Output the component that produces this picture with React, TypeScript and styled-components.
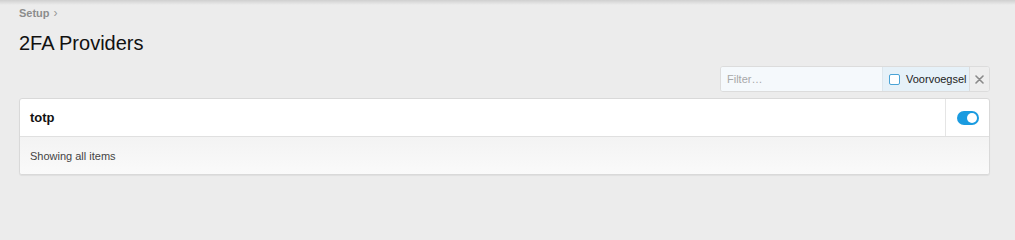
import React, { useState } from 'react'
import styled, { createGlobalStyle } from 'styled-components'

const GlobalStyle = createGlobalStyle`
  html, body {
    margin: 0;
    padding: 0;
    background: #ececec;
    font-family: 'Helvetica Neue', 'Liberation Sans', Arial, sans-serif;
    -webkit-font-smoothing: antialiased;
  }
`

const Page = styled.div`
  position: relative;
  height: 200px;
  padding: 6px 25px 0 19px;
  box-sizing: border-box;
  overflow: hidden;

  &::before {
    content: '';
    position: absolute;
    top: 0;
    left: 0;
    right: 0;
    height: 5px;
    background: linear-gradient(to bottom, rgba(0, 0, 0, 0.12), rgba(0, 0, 0, 0));
  }
`

const Breadcrumb = styled.div`
  display: flex;
  align-items: center;
  gap: 4px;
  font-size: 11px;
  font-weight: 700;
  color: #8c8c8c;
  height: 14px;
`

const Chevron = styled.span`
  font-weight: 400;
  font-size: 12px;
  color: #999;
`

const Title = styled.h1`
  margin: 11px 0 0;
  font-size: 20px;
  font-weight: 400;
  color: #111;
  line-height: 24px;
`

const Toolbar = styled.div`
  display: flex;
  justify-content: flex-end;
  margin-top: 11px;
`

const FilterGroup = styled.div`
  display: flex;
  width: 270px;
  height: 26px;
  border: 1px solid #dcdcdc;
  border-radius: 3px;
  overflow: hidden;
  box-sizing: border-box;
  background: #f5f9fc;
`

const FilterInput = styled.input`
  flex: 1;
  min-width: 0;
  width: 0;
  border: none;
  outline: none;
  background: #f5f9fc;
  padding: 0 6px;
  font-family: inherit;
  font-size: 11px;
  color: #333;

  &::placeholder {
    color: #a8a8a8;
  }
`

const PrefixLabel = styled.label`
  flex-shrink: 0;
  display: flex;
  align-items: center;
  gap: 6px;
  padding: 0 6px;
  width: 87px;
  box-sizing: border-box;
  border-left: 1px solid #dde6ec;
  background: #e6f1f8;
  font-size: 11px;
  color: #222;
  cursor: pointer;
`

const CheckBox = styled.span<{ checked: boolean }>`
  flex-shrink: 0;
  width: 9px;
  height: 9px;
  border: 1px solid #4aa3d6;
  border-radius: 2px;
  background: ${(p) => (p.checked ? '#1a9be0' : '#fff')};
`

const ClearButton = styled.button`
  flex-shrink: 0;
  width: 20px;
  border: none;
  border-left: 1px solid #dcdcdc;
  background: #eeeeee;
  color: #8a8a8a;
  padding: 0;
  display: flex;
  align-items: center;
  justify-content: center;
  cursor: pointer;
`

const Card = styled.div`
  margin-top: 6px;
  background: #fff;
  border: 1px solid #d9d9d9;
  border-radius: 3px;
  box-shadow: 0 1px 1px rgba(0, 0, 0, 0.06);
  overflow: hidden;
`

const Row = styled.div`
  display: flex;
  height: 37px;
  border-bottom: 1px solid #e0e0e0;
`

const RowName = styled.div`
  flex: 1;
  display: flex;
  align-items: center;
  padding-left: 10px;
  font-size: 13px;
  font-weight: 700;
  color: #111;
`

const RowAction = styled.div`
  width: 43px;
  border-left: 1px solid #e5e5e5;
  display: flex;
  align-items: center;
  justify-content: center;
`

const Toggle = styled.button<{ on: boolean }>`
  position: relative;
  width: 22px;
  height: 14px;
  border: none;
  border-radius: 7px;
  padding: 0;
  background: ${(p) => (p.on ? '#1a9be0' : '#ccc')};
  cursor: pointer;

  &::after {
    content: '';
    position: absolute;
    top: 2px;
    left: ${(p) => (p.on ? '10px' : '2px')};
    width: 10px;
    height: 10px;
    border-radius: 50%;
    background: #fff;
  }
`

const Footer = styled.div`
  height: 37px;
  display: flex;
  align-items: center;
  padding-left: 10px;
  font-size: 11px;
  color: #444;
  background: linear-gradient(to bottom, #f3f3f3, #fafafa);
`

export default function App() {
  const [filter, setFilter] = useState('')
  const [prefix, setPrefix] = useState(false)
  const [enabled, setEnabled] = useState(true)

  return (
    <>
      <GlobalStyle />
      <Page>
        <Breadcrumb>
          Setup <Chevron>›</Chevron>
        </Breadcrumb>
        <Title>2FA Providers</Title>
        <Toolbar>
          <FilterGroup>
            <FilterInput placeholder="Filter…" value={filter} onChange={(e) => setFilter(e.target.value)} />
            <PrefixLabel onClick={() => setPrefix(!prefix)}>
              <CheckBox checked={prefix} />
              Voorvoegsel
            </PrefixLabel>
            <ClearButton onClick={() => setFilter('')}>
              <svg width="9" height="9" viewBox="0 0 9 9">
                <path d="M1 1L8 8M8 1L1 8" stroke="currentColor" strokeWidth="1.6" strokeLinecap="round" />
              </svg>
            </ClearButton>
          </FilterGroup>
        </Toolbar>
        <Card>
          <Row>
            <RowName>totp</RowName>
            <RowAction>
              <Toggle on={enabled} onClick={() => setEnabled(!enabled)} />
            </RowAction>
          </Row>
          <Footer>Showing all items</Footer>
        </Card>
      </Page>
    </>
  )
}
